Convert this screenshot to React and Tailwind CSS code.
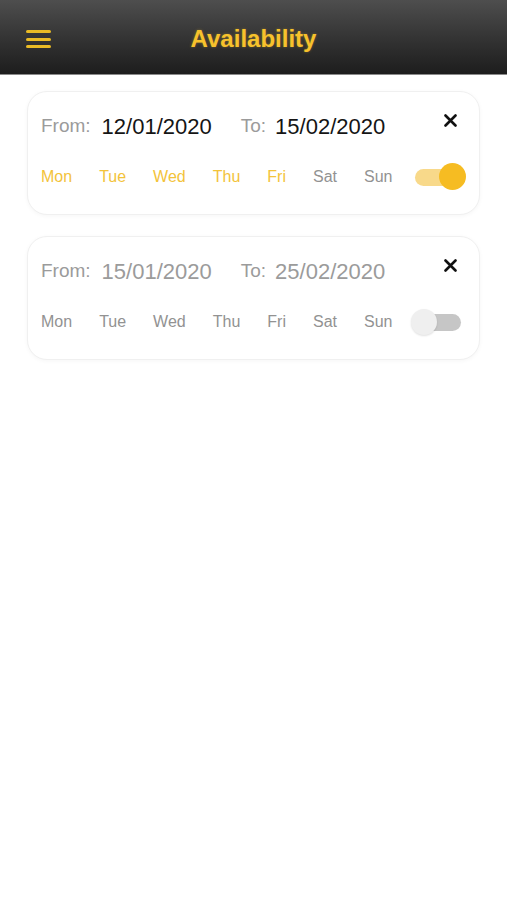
import React from 'react';

const DAYS = ['Mon', 'Tue', 'Wed', 'Thu', 'Fri', 'Sat', 'Sun'];

const slots = [
    { from: '12/01/2020', to: '15/02/2020', active: true, days: [0, 1, 2, 3, 4] },
    { from: '15/01/2020', to: '25/02/2020', active: false, days: [] },
];

function Toggle({ on }) {
    return (
        <div className="relative h-[28px] w-[55px] shrink-0">
            <div
                className={
                    'absolute left-[4px] top-[6px] h-[17px] w-[46px] rounded-full ' +
                    (on ? 'bg-[#f8d98a]' : 'bg-[#c6c6c6]')
                }
            />
            {on ? (
                <div className="absolute right-0 top-0 h-[27px] w-[27px] rounded-full bg-[#f6bc22]" />
            ) : (
                <div className="absolute left-0 top-[1px] h-[26px] w-[26px] rounded-full bg-[#efefef] shadow-[0_1px_2px_rgba(0,0,0,0.12)]" />
            )}
        </div>
    );
}

function SlotCard({ slot }) {
    const dateColor = slot.active ? 'text-[#151515]' : 'text-[#9b9b9b]';
    return (
        <div className="relative rounded-[20px] border border-[#f0f0f0] bg-white px-[13px] pb-[25px] pt-[20px] shadow-[0_1px_4px_rgba(0,0,0,0.04)]">
            <div className="flex h-[28px] items-center">
                <span className="text-[19px] text-[#9b9b9b]">From:</span>
                <span className={'ml-[11px] text-[22px] ' + dateColor}>{slot.from}</span>
                <span className="ml-[29px] text-[19px] text-[#9b9b9b]">To:</span>
                <span className={'ml-[9px] text-[22px] ' + dateColor}>{slot.to}</span>
            </div>

            <svg
                className="absolute right-[22px] top-[22px] h-[13px] w-[13px]"
                viewBox="0 0 13 13"
                fill="none"
                stroke="#111"
                strokeWidth="2.6"
                strokeLinecap="round"
            >
                <path d="M1.5 1.5 L11.5 11.5 M11.5 1.5 L1.5 11.5" />
            </svg>

            <div className="mt-[25px] flex h-[24px] items-center">
                <div className="flex gap-[27px] text-[16px]">
                    {DAYS.map((day, i) => (
                        <span
                            key={day}
                            className={slot.days.includes(i) ? 'text-[#f3c33a]' : 'text-[#929292]'}
                        >
                            {day}
                        </span>
                    ))}
                </div>
                <div className="ml-auto">
                    <Toggle on={slot.active} />
                </div>
            </div>
        </div>
    );
}

export default function App() {
    return (
        <div className="min-h-[900px] bg-white" style={{ fontFamily: '"Liberation Sans", Arial, sans-serif' }}>
            <header className="relative flex h-[75px] items-center justify-center border-b border-[#8a8a8a] bg-gradient-to-b from-[#4e4e4e] to-[#1d1d1d]">
                <div className="absolute left-[26px] top-[30px] flex w-[25px] flex-col gap-[4.5px]">
                    <span className="h-[3px] rounded-full bg-[#eabb25]" />
                    <span className="h-[3px] rounded-full bg-[#eabb25]" />
                    <span className="h-[3px] rounded-full bg-[#eabb25]" />
                </div>
                <h1 className="mt-[4px] text-[24px] font-bold text-[#f7c22c] [text-shadow:0_0_3px_rgba(247,194,44,0.35)]">
                    Availability
                </h1>
            </header>

            <div className="flex flex-col gap-[21px] px-[27px] pt-[16px]">
                {slots.map((slot) => (
                    <SlotCard key={slot.from} slot={slot} />
                ))}
            </div>
        </div>
    );
}
